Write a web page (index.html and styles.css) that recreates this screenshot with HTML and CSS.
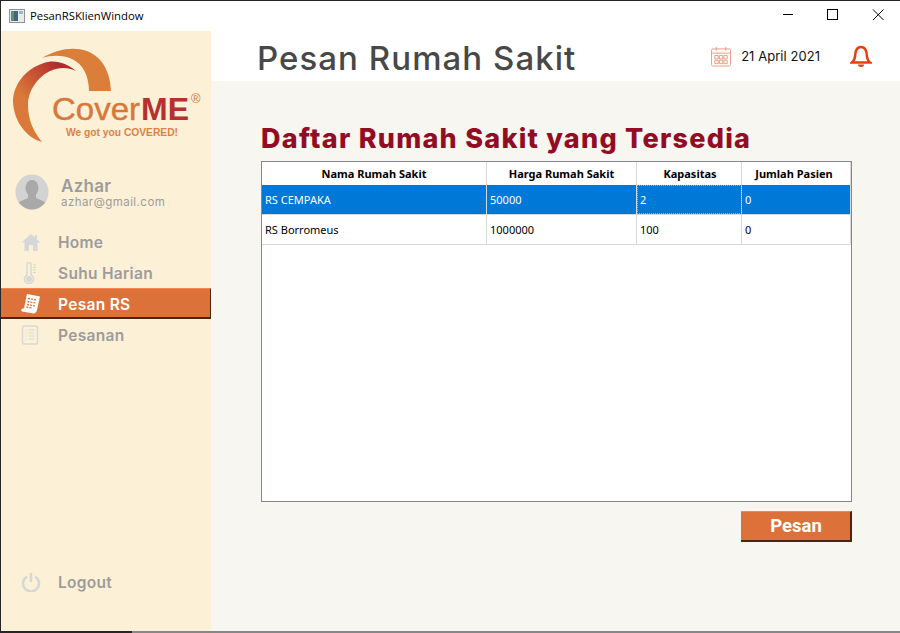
FILE: index.html
```html
<!DOCTYPE html>
<html lang="id">
<head>
<meta charset="utf-8">
<title>PesanRSKlienWindow</title>
<link rel="stylesheet" href="styles.css">
</head>
<body>
<div class="window">
  <header class="titlebar">
    <svg class="app-icon" width="16" height="14" viewBox="0 0 16 14"><rect x=".5" y=".5" width="15" height="13" fill="#e8eaec" stroke="#8b9299"/><rect x="2" y="2" width="7" height="10" fill="#3f6b78"/><rect x="2" y="2" width="3" height="10" fill="#5c8f7a"/><rect x="10" y="2" width="4" height="3" fill="#aab4bb"/></svg>
    <span class="app-title">PesanRSKlienWindow</span>
    <div class="controls">
      <svg width="12" height="12" viewBox="0 0 12 12"><path d="M1 5.500h10" stroke="#000" fill="none"/></svg>
      <svg width="12" height="12" viewBox="0 0 12 12"><rect x=".5" y=".5" width="10" height="10" stroke="#000" fill="none"/></svg>
      <svg width="12" height="12" viewBox="0 0 12 12"><path d="M1 0.500l10.500 10.500M11.500 0.500L1 11" stroke="#000" fill="none"/></svg>
    </div>
  </header>
  <div class="body">
    <aside class="sidebar">
      <svg class="logo" width="200" height="112" viewBox="0 0 200 112">
        <defs>
          <linearGradient id="arc" x1="0" y1="1" x2="1" y2="0"><stop offset=".35" stop-color="#da7a3a"/><stop offset=".85" stop-color="#b02a2e"/></linearGradient>
        </defs>
        <path d="M41 27C53 20 66 17 75 18C96 19 109 35 110 60H88C88 45 82 33 71 28C62 24 51 24 41 27Z" fill="#da7e3a"/>
        <path d="M75 40C66 32 53 28 43 32C24 38 12 54 12 71C13 91 26 107 41 111C32 100 27 88 27 74C27 59 37 46 49 40C58 36 67 36 75 40Z" fill="url(#arc)"/>
        <text class="logo-cover" x="51" y="89" textLength="88" lengthAdjust="spacingAndGlyphs">Cover</text>
        <text class="logo-me" x="140" y="89" textLength="48" lengthAdjust="spacingAndGlyphs">ME</text>
        <text class="logo-reg" x="190" y="72">®</text>
        <text class="logo-tag" x="65" y="105" textLength="112" lengthAdjust="spacingAndGlyphs">We got you COVERED!</text>
      </svg>
      <div class="user">
        <svg class="avatar" width="34" height="36" viewBox="0 0 34 36"><defs><clipPath id="av"><ellipse cx="17" cy="18" rx="16.500" ry="17.500"/></clipPath></defs><ellipse cx="17" cy="18" rx="16.500" ry="17.500" fill="#d3d3d3"/><g clip-path="url(#av)" fill="#a9a9a9"><ellipse cx="17" cy="14" rx="6.500" ry="8"/><path d="M13 20h8v4l9 4v8H4v-8l9-4z"/></g></svg>
        <div class="user-text">
          <div class="user-name">Azhar</div>
          <div class="user-mail">azhar@gmail.com</div>
        </div>
      </div>
      <nav class="nav">
        <a class="nav-item">
          <svg width="20" height="20" viewBox="0 0 20 20"><path d="M10 2L0.500 10.500H3.500V19H8V13H12V19H16.500V10.500H19.500L16 7.500V3H14V5.500Z" fill="#d5d7d8"/></svg>
          <span>Home</span>
        </a>
        <a class="nav-item">
          <svg width="20" height="22" viewBox="0 0 20 22" fill="none" stroke="#d5d7d8"><path d="M6 2.500a2 2 0 0 1 4 0V13a4.500 4.500 0 1 1-4 0Z" stroke-width="1.500"/><circle cx="8" cy="17" r="3" fill="#d5d7d8" stroke="none"/><path d="M12 3h3M12 5.500h3M12 8h3M12 10.500h3"/></svg>
          <span>Suhu Harian</span>
        </a>
        <a class="nav-item active">
          <svg width="20" height="21" viewBox="1 0 20 21"><path d="M7 1L20 3.500L17 17C16.500 19 15.500 20.500 13.500 20.500L2 18.500C1 18 1 16 2.500 15.500L4 15.500Z" fill="#fff"/><path d="M8 5.500l8.500 1.500M7.500 8.500l8.500 1.500M7 11.500l8.500 1.500M6.500 14l6 1" stroke="#dc7239" stroke-width="1.300" stroke-dasharray="2 1"/></svg>
          <span>Pesan RS</span>
        </a>
        <a class="nav-item narrow-icon">
          <svg width="18" height="20" viewBox="0 0 18 20" fill="none" stroke="#d8dad9" stroke-width="1.500"><rect x="1.500" y="1" width="15" height="18" rx="1.500"/><path d="M4.500 5h1M7.500 5h6M4.500 8h1M7.500 8h6M4.500 11h1M7.500 11h6M4.500 14h1M7.500 14h6" stroke-width="1"/></svg>
          <span>Pesanan</span>
        </a>
      </nav>
      <a class="nav-item logout">
        <svg width="20" height="20" viewBox="0 0 20 20" fill="none" stroke="#d5d7d8" stroke-width="2.500"><path d="M6 4.500a8 8 0 1 0 8 0"/><path d="M10 1v9"/></svg>
        <span>Logout</span>
      </a>
    </aside>
    <div class="main">
      <div class="topbar">
        <h1 class="page-title">Pesan Rumah Sakit</h1>
        <div class="date">
          <svg width="20" height="21" viewBox="0 0 21 21" fill="none" stroke="#ec9a7c"><rect x=".5" y="2.500" width="20" height="18" rx="1.500"/><path d="M.5 7h20M5.500 .5v4M15.500 .5v4"/><path d="M4 9.500h3.500v3.500H4zM8.800 9.500h3.500v3.500H8.800zM13.500 9.500H17v3.500h-3.500zM4 14.500h3.500V18H4zM8.800 14.500h3.500V18H8.800zM13.500 14.500H17V18h-3.500z"/></svg>
          <span>21 April 2021</span>
        </div>
        <svg class="bell" width="22" height="22" viewBox="0 0 22 22" fill="none" stroke="#e6400f" stroke-width="2.500"><path d="M2 17.500h18c-2.500-2-3-4-3.200-7.500C16.500 5 14.500 2 11 2S5.500 5 5.200 10C5 13.500 4.500 15.500 2 17.500Z"/><path d="M8 19.500a3 2.500 0 0 0 6 0Z" fill="#e6400f" stroke="none"/></svg>
      </div>
      <section class="content">
        <h2 class="heading">Daftar Rumah Sakit yang Tersedia</h2>
        <div class="table">
          <div class="row head">
            <div class="cell">Nama Rumah Sakit</div>
            <div class="cell">Harga Rumah Sakit</div>
            <div class="cell cap-head">Kapasitas</div>
            <div class="cell pasien-head">Jumlah Pasien</div>
          </div>
          <div class="row selected">
            <div class="cell">RS CEMPAKA</div>
            <div class="cell">50000</div>
            <div class="cell current">2</div>
            <div class="cell">0</div>
          </div>
          <div class="row">
            <div class="cell">RS Borromeus</div>
            <div class="cell">1000000</div>
            <div class="cell">100</div>
            <div class="cell">0</div>
          </div>
        </div>
        <div class="actions"><button class="btn">Pesan</button></div>
      </section>
    </div>
  </div>
</div>
<div class="desktop-edge"><span class="edge-dark"></span><span class="edge-gray"></span></div>
</body>
</html>
```
FILE: styles.css
```css
* { box-sizing: border-box; }
html, body { margin: 0; height: 633px; overflow: hidden; }
body { background: #262626; padding-top: 1px; display: flex; flex-direction: column; font-family: "Inter", "Open Sans", sans-serif; }
.window { margin-left: 1px; height: 630px; display: flex; flex-direction: column; background: #fff; }
.desktop-edge { display: flex; height: 2px; }
.edge-dark { width: 132px; background: #262626; }
.edge-gray { flex: 1; background: #87878a; }

.titlebar { height: 30px; flex: none; display: flex; align-items: center; background: #fff; padding-left: 8px; }
.app-icon { margin-right: 5px; }
.app-title { font: 11.300px/1 "Open Sans", sans-serif; color: #000; }
.controls { margin-left: auto; display: flex; gap: 33px; padding-right: 16px; margin-top: -2px; }
.controls svg { display: block; }

.body { flex: 1; display: flex; min-height: 0; }
.sidebar { width: 210px; flex: none; background: #fcf0d6; display: flex; flex-direction: column; }
.logo { display: block; flex: none; }
.logo-cover { font: 32px "Liberation Sans", sans-serif; fill: #d9773a; stroke: #d9773a; stroke-width: .4px; }
.logo-me { font: bold 32px "Liberation Sans", sans-serif; fill: #b53130; }
.logo-reg { font: 13px "Liberation Sans", sans-serif; fill: #d9773a; }
.logo-tag { font: 700 10.500px "Liberation Sans", sans-serif; fill: #dc8247; }

.user { display: flex; align-items: center; padding-left: 14px; margin-top: 31px; height: 36px; }
.avatar { flex: none; }
.user-text { margin: 2px 0 0 12px; color: #9c9c9c; }
.user-name { font-size: 17px; font-weight: 600; line-height: 18px; letter-spacing: .3px; }
.user-mail { font-size: 11.500px; line-height: 14px; letter-spacing: .45px; }

.nav { margin-top: 16px; display: flex; flex-direction: column; }
.nav-item { height: 31px; display: flex; align-items: center; padding: 2px 0 0 20px; color: #9c9c9c; font-size: 15.500px; font-weight: 600; letter-spacing: .3px; }
.nav-item svg { flex: none; margin-top: -2px; }
.nav-item span { margin-left: 17px; }
.narrow-icon span { margin-left: 19px; }
.nav-item.active { background: #dc7239; color: #fff; width: 211px; padding-top: 3px; border-top: 1px solid #f5854a; border-right: 2px solid #4a2510; border-bottom: 2px solid #4a2510; }
.logout { margin-top: auto; margin-bottom: 34px; }

.main { flex: 1; min-width: 0; display: flex; flex-direction: column; background: #f7f6f1; }
.topbar { height: 50px; flex: none; background: #fff; display: flex; align-items: center; padding: 5px 0 0 46px; }
.page-title { margin: 0; font-size: 33px; font-weight: 500; color: #484848; line-height: 1; letter-spacing: 1.05px; }
.date { margin: -5px 0 0 auto; display: flex; align-items: center; gap: 10px; font-size: 13px; letter-spacing: .05px; color: #111; }
.date svg { display: block; }
.bell { margin: -5px 28px 0 30px; display: block; }

.content { flex: 1; padding: 42px 48px 0 50px; display: flex; flex-direction: column; }
.heading { margin: 0 0 7px; height: 31px; font-size: 27px; font-weight: 800; line-height: 31px; letter-spacing: 1.25px; color: #920d24; white-space: nowrap; }
.table { height: 341px; flex: none; background: #fff; border: 1px solid #87878a; }
.row { display: grid; grid-template-columns: 225px 150px 105px 1fr; height: 30px; border-bottom: 1px solid #d8d8d8; font: 11px/1 "Noto Sans", "Open Sans", sans-serif; color: #000; }
.row .cell { display: flex; align-items: center; padding-left: 3px; border-right: 1px solid #d8d8d8; }
.row.head { height: 23px; border-bottom: 0; font-weight: 700; }
.head .cell { justify-content: center; padding-left: 0; }
.head .cap-head { padding-left: 2px; }
.head .pasien-head { padding-right: 4px; }
.selected { background: #0078d7; color: #fff; }
.cell.current { outline: 1px dotted #e8a060; outline-offset: -1px; }
.actions { display: flex; justify-content: flex-end; margin-top: 9px; }
.btn { width: 111px; height: 31px; padding: 0 0 0 1px; background: #dc7239; color: #fff; font: 700 18.500px/1 "Roboto", sans-serif; border: 0; border-top: 1px solid #f08a50; border-right: 2px solid #4a2510; border-bottom: 2px solid #4a2510; }
```
